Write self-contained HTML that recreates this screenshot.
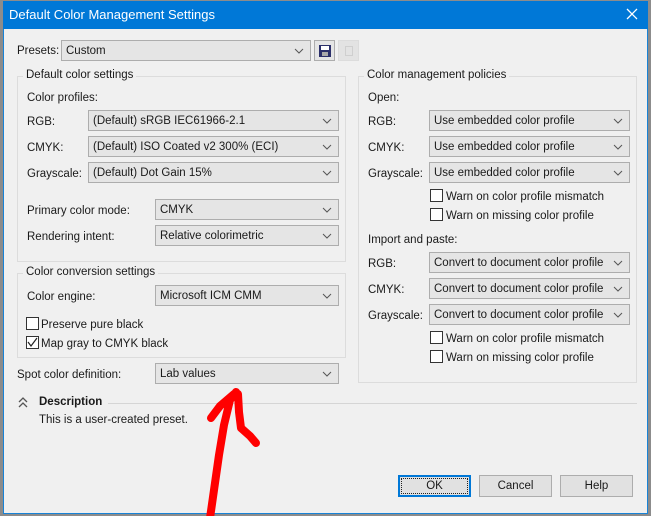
<!DOCTYPE html>
<html><head><meta charset="utf-8"><style>
*{box-sizing:border-box;margin:0;padding:0}
body{width:651px;height:516px;background:#8c8c8c;position:relative;overflow:hidden;font-family:"Liberation Sans",sans-serif;font-size:11.5px;color:#1a1a1a}
.win{position:absolute;left:3px;top:1px;width:645px;height:513px;background:#f0f0f0;border:1px solid #1883d7}
.title{position:absolute;left:3px;top:1px;width:645px;height:28px;background:#0078d7;color:#fff;font-size:13px;line-height:28px;padding-left:6px}
.a{position:absolute;white-space:nowrap;margin-top:1px}
.cb{position:absolute;height:21px;border:1px solid #adadad;background:#e5e5e5;line-height:19px;padding:1px 0 0 4px;white-space:nowrap}
.cb svg{position:absolute;right:6px;top:7px}
.gb{position:absolute;border:1px solid #dcdcdc}
.gt{position:absolute;background:#f0f0f0;padding:0 3px;white-space:nowrap}
.ck{position:absolute;width:13px;height:13px;border:1px solid #333;background:#fff}
.btn{position:absolute;height:22px;border:1px solid #adadad;background:#e1e1e1;text-align:center;line-height:20px}
</style></head><body>
<div class="win"></div>
<div class="title">Default Color Management Settings</div>
<svg style="position:absolute;left:626px;top:8px" width="12" height="12"><path d="M1 1L11 11M11 1L1 11" stroke="#fff" stroke-width="1.3"/></svg>

<div class="a" style="left:17px;top:44px">Presets:</div>
<div class="cb" style="left:61px;top:40px;width:250px">Custom<svg width="10" height="6"><path d="M1 1l4 4 4-4" stroke="#555" fill="none"/></svg></div>
<div style="position:absolute;left:314px;top:40px;width:21px;height:21px;border:1px solid #adadad;background:#e5e5e5"><div style="position:absolute;left:4px;top:4px;width:12px;height:12px;background:#2b2f6a"></div><div style="position:absolute;left:6px;top:5px;width:8px;height:4px;background:#fff"></div><div style="position:absolute;left:7px;top:11px;width:6px;height:4px;background:#aaa"></div></div>
<div style="position:absolute;left:338px;top:40px;width:21px;height:21px;background:#e3e3e3;border:1px solid #dcdcdc"><div style="position:absolute;left:6px;top:5px;width:8px;height:10px;border:1px solid #cfcfcf"></div></div>

<div class="gb" style="left:17px;top:76px;width:329px;height:186px"></div>
<div class="gt" style="left:23px;top:69px">Default color settings</div>
<div class="a" style="left:27px;top:91px">Color profiles:</div>
<div class="a" style="left:27px;top:115px">RGB:</div>
<div class="cb" style="left:88px;top:110px;width:251px">(Default) sRGB IEC61966-2.1<svg width="10" height="6"><path d="M1 1l4 4 4-4" stroke="#555" fill="none"/></svg></div>
<div class="a" style="left:27px;top:141px">CMYK:</div>
<div class="cb" style="left:88px;top:136px;width:251px">(Default) ISO Coated v2 300% (ECI)<svg width="10" height="6"><path d="M1 1l4 4 4-4" stroke="#555" fill="none"/></svg></div>
<div class="a" style="left:27px;top:167px">Grayscale:</div>
<div class="cb" style="left:88px;top:162px;width:251px">(Default) Dot Gain 15%<svg width="10" height="6"><path d="M1 1l4 4 4-4" stroke="#555" fill="none"/></svg></div>
<div class="a" style="left:27px;top:204px">Primary color mode:</div>
<div class="cb" style="left:155px;top:199px;width:184px">CMYK<svg width="10" height="6"><path d="M1 1l4 4 4-4" stroke="#555" fill="none"/></svg></div>
<div class="a" style="left:27px;top:230px">Rendering intent:</div>
<div class="cb" style="left:155px;top:225px;width:184px">Relative colorimetric<svg width="10" height="6"><path d="M1 1l4 4 4-4" stroke="#555" fill="none"/></svg></div>

<div class="gb" style="left:17px;top:273px;width:329px;height:85px"></div>
<div class="gt" style="left:23px;top:266px">Color conversion settings</div>
<div class="a" style="left:27px;top:290px">Color engine:</div>
<div class="cb" style="left:155px;top:285px;width:184px">Microsoft ICM CMM<svg width="10" height="6"><path d="M1 1l4 4 4-4" stroke="#555" fill="none"/></svg></div>
<div class="ck" style="left:26px;top:317px"></div><div class="a" style="left:41px;top:318px">Preserve pure black</div>
<div class="ck" style="left:26px;top:336px"><svg width="11" height="11" style="position:absolute;left:0;top:0"><path d="M1 5l3 4 6-8" stroke="#222" fill="none" stroke-width="1.2"/></svg></div><div class="a" style="left:41px;top:337px">Map gray to CMYK black</div>

<div class="a" style="left:17px;top:368px">Spot color definition:</div>
<div class="cb" style="left:155px;top:363px;width:184px">Lab values<svg width="10" height="6"><path d="M1 1l4 4 4-4" stroke="#555" fill="none"/></svg></div>

<div class="gb" style="left:358px;top:76px;width:279px;height:307px"></div>
<div class="gt" style="left:364px;top:69px">Color management policies</div>
<div class="a" style="left:368px;top:91px">Open:</div>
<div class="a" style="left:368px;top:115px">RGB:</div>
<div class="cb" style="left:429px;top:110px;width:201px">Use embedded color profile<svg width="10" height="6"><path d="M1 1l4 4 4-4" stroke="#555" fill="none"/></svg></div>
<div class="a" style="left:368px;top:141px">CMYK:</div>
<div class="cb" style="left:429px;top:136px;width:201px">Use embedded color profile<svg width="10" height="6"><path d="M1 1l4 4 4-4" stroke="#555" fill="none"/></svg></div>
<div class="a" style="left:368px;top:167px">Grayscale:</div>
<div class="cb" style="left:429px;top:162px;width:201px">Use embedded color profile<svg width="10" height="6"><path d="M1 1l4 4 4-4" stroke="#555" fill="none"/></svg></div>
<div class="ck" style="left:430px;top:189px"></div><div class="a" style="left:446px;top:190px">Warn on color profile mismatch</div>
<div class="ck" style="left:430px;top:208px"></div><div class="a" style="left:446px;top:209px">Warn on missing color profile</div>
<div class="a" style="left:368px;top:233px">Import and paste:</div>
<div class="a" style="left:368px;top:257px">RGB:</div>
<div class="cb" style="left:429px;top:252px;width:201px">Convert to document color profile<svg width="10" height="6"><path d="M1 1l4 4 4-4" stroke="#555" fill="none"/></svg></div>
<div class="a" style="left:368px;top:283px">CMYK:</div>
<div class="cb" style="left:429px;top:278px;width:201px">Convert to document color profile<svg width="10" height="6"><path d="M1 1l4 4 4-4" stroke="#555" fill="none"/></svg></div>
<div class="a" style="left:368px;top:309px">Grayscale:</div>
<div class="cb" style="left:429px;top:304px;width:201px">Convert to document color profile<svg width="10" height="6"><path d="M1 1l4 4 4-4" stroke="#555" fill="none"/></svg></div>
<div class="ck" style="left:430px;top:331px"></div><div class="a" style="left:446px;top:332px">Warn on color profile mismatch</div>
<div class="ck" style="left:430px;top:350px"></div><div class="a" style="left:446px;top:351px">Warn on missing color profile</div>

<svg style="position:absolute;left:18px;top:397px" width="10" height="12"><path d="M1 5l4-4 4 4M1 10l4-4 4 4" stroke="#555" fill="none" stroke-width="1.3"/></svg>
<div class="a" style="left:39px;top:395px;font-weight:bold">Description</div>
<div style="position:absolute;left:108px;top:403px;width:529px;height:1px;background:#d5d5d5"></div>
<div class="a" style="left:39px;top:413px">This is a user-created preset.</div>

<div class="btn" style="left:398px;top:475px;width:73px;border:2px solid #0078d7;line-height:18px"><div style="position:absolute;inset:1px;border:1px dotted #222"></div>OK</div>
<div class="btn" style="left:479px;top:475px;width:73px">Cancel</div>
<div class="btn" style="left:560px;top:475px;width:73px">Help</div>

<svg style="position:absolute;left:0;top:0" width="651" height="516"><path d="M210 518 L214 490 L219 455 L224 425 L230 400 L236 392 M234 394 L220 406 L211 418 M238 394 L239 412 L241 428 L250 436 L256 443" stroke="#f00" stroke-width="8" fill="none" stroke-linecap="round" stroke-linejoin="round"/></svg>
</body></html>
